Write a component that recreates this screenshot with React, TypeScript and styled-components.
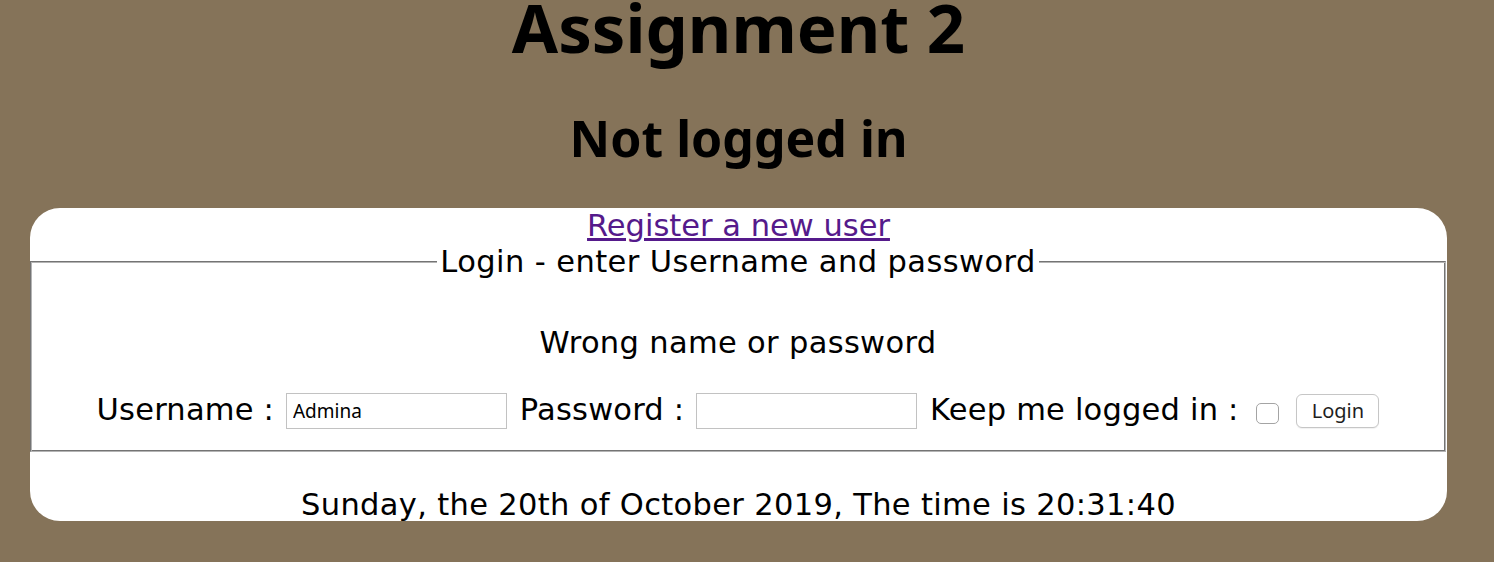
import React from "react";
import styled, { createGlobalStyle } from "styled-components";

const GlobalStyle = createGlobalStyle`
  html, body {
    margin: 0;
    padding: 0;
    background: #857359;
  }
  body {
    font-family: "DejaVu Sans", "Noto Sans", sans-serif;
    color: #000;
  }
`;

const Page = styled.div`
  width: 1417px;
  padding-left: 30px;
  text-align: center;
`;

const Title = styled.h1`
  margin: 0;
  font: 700 67px/54px "Noto Sans", "DejaVu Sans", sans-serif;
  color: #000;
`;

const Status = styled.h2`
  margin: 53.6px 0 0;
  font: 700 50px/60px "Noto Sans", "DejaVu Sans", sans-serif;
  color: #000;
`;

const Card = styled.main`
  margin-top: 40.4px;
  height: 313px;
  background: #fff;
  border-radius: 30px;
  overflow: hidden;
  font: 400 30.5px/36px "DejaVu Sans", sans-serif;
  letter-spacing: 0.33px;
`;

const LinkLine = styled.div`
  height: 36px;
`;

const RegisterLink = styled.a`
  color: #551a8b;
  text-decoration: underline;
  letter-spacing: 0;
`;

const LoginSet = styled.fieldset`
  margin: 0 1px 0 0;
  padding: 0 12px 22px;
  border: 1px solid;
  border-color: #747474 #b4b4b4 #b4b4b4 #747474;
  box-shadow: inset 1px 1px 0 #b4b4b4, inset -1px -1px 0 #747474;
  min-width: 0;
`;

const Legend = styled.legend`
  margin: 0 auto;
  padding: 0 3px;
  line-height: 36px;
  background: #fff;
  letter-spacing: 0.42px;
`;

const Message = styled.p`
  margin: 45px 0 0;
  line-height: 36px;
`;

const FormRow = styled.div`
  margin-top: 31px;
  line-height: 36px;
  white-space: nowrap;
  letter-spacing: 0.2px;
`;

const TextInput = styled.input`
  box-sizing: border-box;
  width: 221px;
  height: 36px;
  margin: 0 3px 0 2px;
  padding: 0 6px;
  border: 1px solid #c2c2c2;
  border-radius: 0;
  background: #fff;
  color: #000;
  font: 400 19px "Noto Sans", sans-serif;
  letter-spacing: 0;
  vertical-align: 1.5px;
  outline: none;
`;

const CheckBox = styled.input`
  appearance: none;
  -webkit-appearance: none;
  display: inline-block;
  box-sizing: border-box;
  width: 23px;
  height: 21px;
  margin: 0 8px 0 7px;
  border: 1px solid #a4a4a4;
  border-radius: 5px;
  background: #fff;
  vertical-align: -4.5px;
`;

const LoginButton = styled.button`
  box-sizing: border-box;
  height: 34px;
  width: 83px;
  margin: 0;
  padding: 0;
  border: 1px solid #c6c6c6;
  border-radius: 6px;
  background: #fff;
  color: #1e1e1e;
  font: 400 20px "Noto Sans", sans-serif;
  letter-spacing: 0;
  box-shadow: 0 1px 1px rgba(0, 0, 0, 0.06);
  vertical-align: 1.5px;
`;

const DateLine = styled.div`
  margin-top: 35px;
  line-height: 36px;
`;

export default function App() {
  return (
    <>
      <GlobalStyle />
      <Page>
        <Title>Assignment 2</Title>
        <Status>Not logged in</Status>
        <Card>
          <LinkLine>
            <RegisterLink href="#register">Register a new user</RegisterLink>
          </LinkLine>
          <LoginSet>
            <Legend>Login - enter Username and password</Legend>
            <Message>Wrong name or password</Message>
            <FormRow>
              Username :{" "}
              <TextInput type="text" defaultValue="Admina" />{" "}
              Password :{" "}
              <TextInput type="password" defaultValue="" />{" "}
              Keep me logged in :{" "}
              <CheckBox type="checkbox" />{" "}
              <LoginButton type="button">Login</LoginButton>
            </FormRow>
          </LoginSet>
          <DateLine>
            Sunday, the 20th of October 2019, The time is 20:31:40
          </DateLine>
        </Card>
      </Page>
    </>
  );
}
